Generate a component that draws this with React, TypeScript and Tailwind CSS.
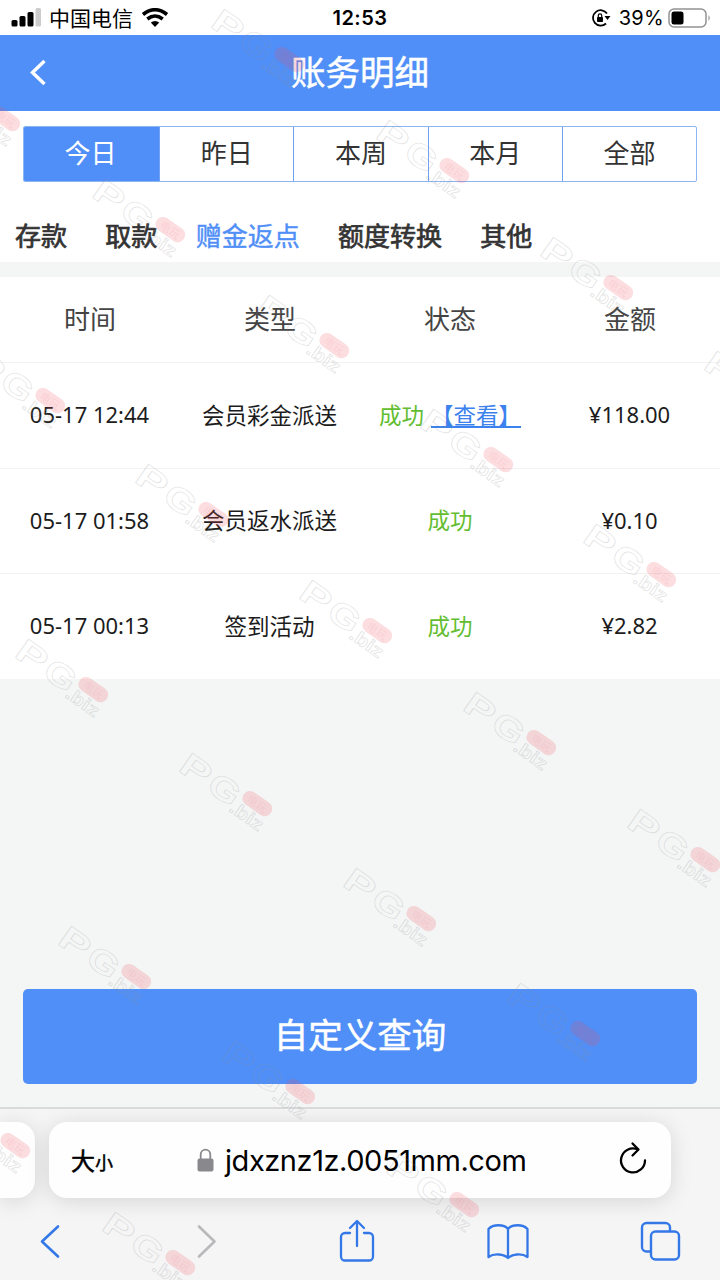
type RecordItem = {
  time: string
  type: string
  amount: string
  viewable?: boolean
}

const periods = ["今日", "昨日", "本周", "本月", "全部"]
const categories = ["存款", "取款", "赠金返点", "额度转换", "其他"]
const columns = ["时间", "类型", "状态", "金额"]

const records: RecordItem[] = [
  { time: "05-17 12:44", type: "会员彩金派送", amount: "¥118.00", viewable: true },
  { time: "05-17 01:58", type: "会员返水派送", amount: "¥0.10" },
  { time: "05-17 00:13", type: "签到活动", amount: "¥2.82" },
]

// centres of the red pills
const marks = [
  [289, 60], [5, 119], [454, 171], [170, 230], [618, 288], [334, 346],
  [50, 401], [782, 402], [498, 460], [213, 515], [661, 575], [377, 631],
  [93, 690], [541, 743], [257, 804], [705, 860], [421, 919], [136, 977],
  [585, 1034], [300, 1092], [15, 1146], [464, 1205], [180, 1263],
]

function Watermark() {
  return (
    <svg className="pointer-events-none absolute inset-0" width="720" height="1280" fill="none">
      {marks.map(([x, y]) => (
        <g key={`${x}-${y}`} transform={`translate(${x} ${y}) rotate(35)`}>
          <g
            fontFamily="'Liberation Sans', sans-serif"
            fontWeight="bold"
            stroke="#909090"
            strokeOpacity="0.24"
            strokeWidth="0.8"
          >
            <text x="-85" y="18" fontSize="33" textLength="31" lengthAdjust="spacingAndGlyphs">P</text>
            <text x="-51" y="18" fontSize="33" textLength="32" lengthAdjust="spacingAndGlyphs">G</text>
            <text x="-20" y="22" fontSize="18" textLength="37" lengthAdjust="spacingAndGlyphs">.biz</text>
          </g>
          <rect x="-16.5" y="-8" width="33" height="15" rx="7.500" fill="#f04b5a" fillOpacity="0.19" />
          <text
            x="-11"
            y="4"
            fontSize="11"
            fontFamily="'Noto Sans CJK SC', sans-serif"
            fill="#f04b5a"
            fillOpacity="0.1"
          >
            电玩
          </text>
        </g>
      ))}
    </svg>
  )
}

function StatusBar() {
  return (
    <div className="grid h-[35px] grid-cols-3 items-center bg-white text-black">
      <div className="flex items-center pl-[11px]">
        <svg width="31" height="20" viewBox="0 0 31 20">
          <rect x="0.500" y="12" width="6" height="6.500" rx="1.500" />
          <rect x="8.500" y="8" width="6" height="10.500" rx="1.500" />
          <rect x="16.500" y="4" width="6" height="14.500" rx="1.500" />
          <rect x="24.500" y="0" width="5.500" height="18.500" rx="1.500" fill="#cccccc" />
        </svg>
        <span className="ml-[7px] text-[21px] leading-none">中国电信</span>
        <svg className="ml-[8px]" width="28" height="20" viewBox="0 0 28 20" fill="none" stroke="#000" strokeWidth="3.600">
          <path d="M2 6.500Q14 -3 26 6.500" />
          <path d="M6.300 11Q14 5 21.700 11" />
          <path d="M9.800 14.500Q14 11.500 18.200 14.500L14 19z" fill="#000" stroke="none" />
        </svg>
      </div>
      <div className="pt-px text-center font-[Inter] text-[20px] font-semibold tracking-[0.500px]">12:53</div>
      <div className="flex items-center justify-end pr-[9px]">
        <svg width="20" height="20" viewBox="0 0 20 20" fill="none" stroke="#000" strokeWidth="1.800">
          <path d="M16 5.500A7.700 7.700 0 1 0 15 15.500" />
          <path d="M16.500 12l-3-4h6z" fill="#000" stroke="none" />
          <rect x="6" y="9" width="6" height="5" rx="0.800" fill="#000" stroke="none" />
          <path d="M7.300 9V7.500a1.700 1.700 0 0 1 3.400 0V9" strokeWidth="1.200" />
        </svg>
        <span className="ml-[8px] pt-px font-[Inter] text-[20px] leading-none tracking-[0.300px]">39%</span>
        <svg className="ml-[4px]" width="43" height="20" viewBox="0 0 43 20">
          <rect x="1" y="1" width="37" height="18" rx="5" fill="none" stroke="#929292" strokeWidth="1.500" />
          <rect x="3.500" y="3.500" width="12" height="13" rx="2.500" />
          <path d="M40.500 7Q43 10 40.500 13z" fill="#929292" />
        </svg>
      </div>
    </div>
  )
}

function Header() {
  return (
    <header className="grid h-[76px] grid-cols-[1fr_auto_1fr] items-center bg-[#508ff7] text-white">
      <svg className="mt-[-3px] ml-[28px]" width="20" height="28" viewBox="0 0 20 28" fill="none" stroke="#fff" strokeWidth="3.400">
        <path d="M16.500 3L4.500 14.500L16.500 26" />
      </svg>
      <h1 className="pb-[5px] text-[34.500px] leading-none [-webkit-text-stroke:0.500px_currentColor]">账务明细</h1>
    </header>
  )
}

function Filters() {
  return (
    <div className="h-[151px] bg-white px-[23px] pt-[15px]">
      <div className="flex h-[56px] overflow-hidden rounded-[2px] border border-[#8bb5f3]">
        {periods.map((period, i) => (
          <div
            key={period}
            className={
              i === 0
                ? "flex flex-1 items-center justify-center bg-[#508ff7] pr-[2px] pb-[6px] text-[26px] text-white"
                : "flex flex-1 items-center justify-center border-l border-[#6ea2f2] pb-[6px] text-[26px] text-[#333]"
            }
          >
            {period}
          </div>
        ))}
      </div>
      <div className="-ml-[8px] flex gap-[38.300px] pt-[39px] text-[26px] leading-[27px] whitespace-nowrap text-[#333] [-webkit-text-stroke:0.700px_currentColor]">
        {categories.map((name) => (
          <span key={name} className={name === "赠金返点" ? "text-[#508ff7] [-webkit-text-stroke:0.400px_currentColor]" : ""}>
            {name}
          </span>
        ))}
      </div>
    </div>
  )
}

function RecordTable() {
  return (
    <div className="mt-[15px] bg-white text-center">
      <div className="grid h-[86px] grid-cols-4 items-center border-b border-[#f2f2f2] pb-[5px] text-[26px] text-[#444]">
        {columns.map((name) => (
          <span key={name}>{name}</span>
        ))}
      </div>
      {records.map((item) => (
        <div
          key={item.time}
          className="grid h-[105.500px] grid-cols-4 items-center border-b border-[#f2f2f2] pb-px text-[22.500px] text-[#1c1c1c] last:h-[104.500px] last:border-b-0"
        >
          <span className="pr-px font-['Noto_Sans'] text-[22px]">{item.time}</span>
          <span className="pr-px">{item.type}</span>
          <span className="whitespace-nowrap text-[#63bd31]">
            成功
            {item.viewable && (
              <a className="ml-[7px] text-[#3b82ee] underline decoration-2 underline-offset-[2px]">【查看】</a>
            )}
          </span>
          <span className="pr-px font-['Noto_Sans'] text-[22px]">{item.amount}</span>
        </div>
      ))}
    </div>
  )
}

function BrowserBar() {
  return (
    <footer className="h-[173px] overflow-hidden border-t-2 border-[#dadada] bg-[#f5f5f6]">
      <div className="flex gap-[14px] pt-[13px]">
        <div className="h-[76px] w-[35px] rounded-r-[18px] bg-[#fefefe] shadow-[0_3px_22px_rgba(0,0,0,0.13)]" />
        <div className="flex h-[76px] w-[622px] items-center rounded-[18px] bg-[#fefefe] pr-[23px] pl-[22px] text-black shadow-[0_3px_22px_rgba(0,0,0,0.13)]">
          <span className="whitespace-nowrap [-webkit-text-stroke:0.500px_currentColor]">
            <span className="text-[24px]">大</span>
            <span className="text-[18px]">小</span>
          </span>
          <svg className="mt-[-1px] ml-[84px]" width="17" height="24" viewBox="0 0 17 24">
            <path d="M3.700 11V6.500a4.800 4.800 0 0 1 9.600 0V11" fill="none" stroke="#89898d" strokeWidth="1.800" />
            <rect x="0.500" y="10.500" width="16" height="13" rx="2" fill="#89898d" />
          </svg>
          <span className="ml-[11px] pt-[2px] font-[Inter,sans-serif] text-[29px] tracking-[-0.440px] whitespace-nowrap">
            jdxznz1z.0051mm.com
          </span>
          <svg className="mt-[-5px] ml-auto" width="30" height="34" viewBox="0 0 30 34" fill="none" stroke="#000" strokeWidth="2.300" strokeLinecap="round" strokeLinejoin="round">
            <path d="M27 19.500A12 12 0 1 1 19.500 8.300" />
            <path d="M14.500 2.500L20.500 8.500L14.500 14.500" />
          </svg>
        </div>
      </div>
      <div className="flex px-[39px] pt-[18px]">
        <svg width="23" height="46" viewBox="0 0 23 46" fill="none" stroke="#3478e8" strokeWidth="2.600" strokeLinecap="round" strokeLinejoin="round">
          <path d="M19 10.500L3 25.500L19 40.500" />
        </svg>
        <svg className="ml-[134px]" width="23" height="46" viewBox="0 0 23 46" fill="none" stroke="#b9b9bb" strokeWidth="2.600" strokeLinecap="round" strokeLinejoin="round">
          <path d="M3 10.500L18.500 25.500L3 40.500" />
        </svg>
        <svg className="ml-[120px]" width="36" height="46" viewBox="0 0 36 46" fill="none" stroke="#3478e8" strokeWidth="2.300" strokeLinecap="round" strokeLinejoin="round">
          <path d="M11 17H6a4 4 0 0 0-4 4V40.500a4 4 0 0 0 4 4h24a4 4 0 0 0 4-4V21a4 4 0 0 0-4-4h-5" />
          <path d="M18 30V5.500M11 12l7-7l7 7" />
        </svg>
        <svg className="ml-[111px]" width="44" height="46" viewBox="0 0 44 46" fill="none" stroke="#3478e8" strokeWidth="2.300" strokeLinejoin="round">
          <path d="M22 42C18 38 8 37 2.500 41V13C7 8 18 8 22 13C26 8 37 8 41.500 13V41C36 37 26 38 22 42zM22 13V42" />
        </svg>
        <svg className="ml-[109px]" width="42" height="46" viewBox="0 0 42 46" fill="none" stroke="#3478e8" strokeWidth="2.400">
          <path d="M11.500 35.500H7.500A4.500 4.500 0 0 1 3 31V11.500A4.500 4.500 0 0 1 7.500 7h19a4.500 4.500 0 0 1 4.500 4.500v4" />
          <rect x="12" y="15.500" width="28" height="28" rx="4.500" />
        </svg>
      </div>
    </footer>
  )
}

function App() {
  return (
    <div className="relative flex h-[1280px] w-[720px] flex-col overflow-hidden bg-[#f4f6f6] font-['Noto_Sans_CJK_SC',sans-serif]">
      <StatusBar />
      <Header />
      <Filters />
      <RecordTable />
      <button className="mx-[23px] mt-auto mb-[23px] h-[95px] shrink-0 rounded-[5px] bg-[#508ff7] pb-[6px] text-[34.500px] text-white [-webkit-text-stroke:0.500px_currentColor]">
        自定义查询
      </button>
      <BrowserBar />
      <Watermark />
    </div>
  )
}

export default App
